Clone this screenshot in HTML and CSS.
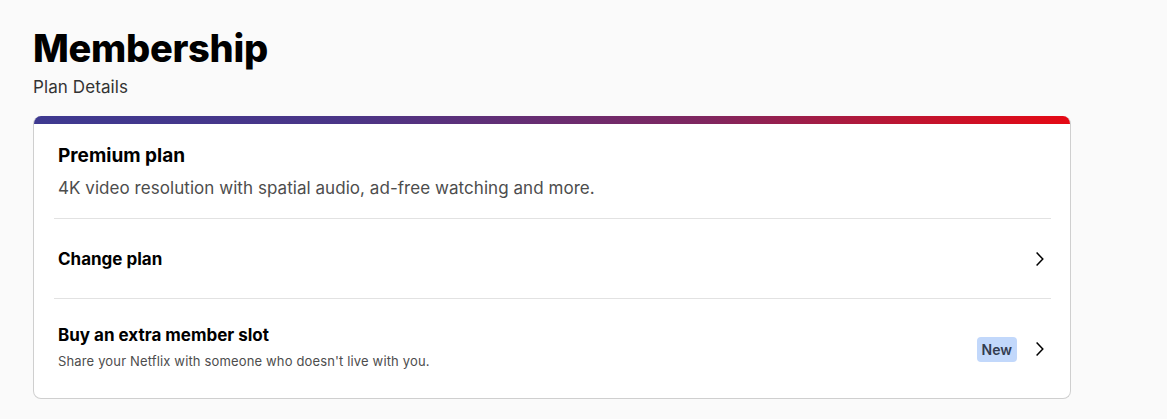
FILE: index.html
```html
<!DOCTYPE html>
<html lang="en">
<head>
<meta charset="utf-8">
<title>Membership</title>
<link rel="stylesheet" href="styles.css">
</head>
<body>
<main class="page">
  <header class="head">
    <h1 class="title">Membership</h1>
    <p class="subtitle">Plan Details</p>
  </header>
  <section class="card">
    <div class="card-bar"></div>
    <div class="card-body">
      <div class="plan">
        <h2 class="plan-name">Premium plan</h2>
        <p class="plan-desc">4K video resolution with spatial audio, ad-free watching and more.</p>
      </div>
      <a class="row" href="#">
        <div class="row-text">
          <span class="row-title">Change plan</span>
        </div>
        <svg class="chev" viewBox="0 0 16 16" width="16" height="16"><path d="M4.6 1.6 10.8 8l-6.2 6.4" fill="none" stroke="#000" stroke-width="1.5"/></svg>
      </a>
      <a class="row row-last" href="#">
        <div class="row-text">
          <span class="row-title">Buy an extra member slot</span>
          <span class="row-sub">Share your Netflix with someone who doesn't live with you.</span>
        </div>
        <span class="badge">New</span>
        <svg class="chev" viewBox="0 0 16 16" width="16" height="16"><path d="M4.6 1.6 10.8 8l-6.2 6.4" fill="none" stroke="#000" stroke-width="1.5"/></svg>
      </a>
    </div>
  </section>
</main>
</body>
</html>
```

FILE: styles.css
```css
* { box-sizing: border-box; }
html, body { margin: 0; padding: 0; }
body {
  background: #fafafa;
  font-family: Inter, "Noto Sans", "Liberation Sans", sans-serif;
  color: #000;
}
.page {
  padding: 23px 96px 0 33px;
}
.head { margin-bottom: 18px; }
.title {
  margin: 0;
  font-size: 38px;
  line-height: 50px;
  font-weight: 800;
  letter-spacing: -0.3px;
}
.subtitle {
  margin: 3px 0 0;
  font-size: 17px;
  line-height: 22px;
  color: #333;
  letter-spacing: 0.1px;
}
.card {
  width: 1038px;
  background: #fff;
  border: 1px solid #cfcfcf;
  border-top: none;
  border-radius: 8px;
  overflow: hidden;
}
.card-bar {
  height: 8px;
  background: linear-gradient(90deg, #3e3990 0%, #4a3587 30%, #80265f 65%, #c0142f 85%, #e50914 100%);
}
.card-body {
  padding: 0 19px 0 20px;
}
.plan {
  padding: 20px 4px 18px;
  border-bottom: 1px solid #e2e2e2;
}
.plan-name {
  margin: 0 0 8px;
  font-size: 19px;
  line-height: 24px;
  font-weight: 700;
}
.plan-desc {
  margin: 0;
  font-size: 17px;
  line-height: 24px;
  color: #4d4d4d;
  letter-spacing: 0.05px;
}
.row {
  display: flex;
  align-items: center;
  padding: 28px 3px 27px 4px;
  border-bottom: 1px solid #e2e2e2;
  color: #000;
  text-decoration: none;
}
.row-last {
  border-bottom: none;
  padding: 24px 3px 27px 4px;
  align-items: flex-start;
}
.row-last .badge { margin-top: 14px; }
.row-last .chev { margin-top: 18px; }
.row-text {
  flex: 1;
  display: flex;
  flex-direction: column;
}
.row-title {
  font-size: 17px;
  line-height: 24px;
  font-weight: 700;
}
.row-sub {
  margin-top: 4px;
  font-size: 13px;
  line-height: 20px;
  color: #4d4d4d;
  letter-spacing: 0.15px;
}
.badge {
  background: #c2d8fb;
  color: #333c50;
  font-size: 14px;
  font-weight: 600;
  line-height: 17px;
  padding: 4px 5px;
  border-radius: 4px;
  margin-right: 15px;
}
.chev { display: block; }
```
